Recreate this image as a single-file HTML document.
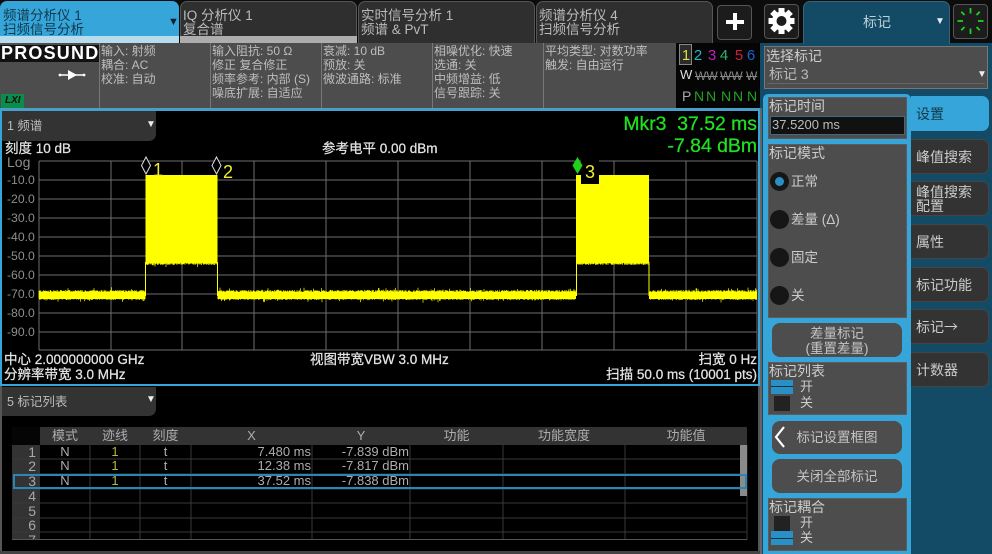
<!DOCTYPE html>
<html lang="zh"><head><meta charset="utf-8"><title>频谱分析仪</title>
<style>
html,body{margin:0;padding:0;background:#000}
#r{position:relative;width:992px;height:554px;overflow:hidden;background:#000;font-family:"Liberation Sans","Noto Sans CJK SC",sans-serif;color:#ccc;filter:blur(.25px)}
#r div{position:absolute;box-sizing:border-box}
.t{white-space:nowrap;line-height:14px}
.h{font-size:12px;line-height:14px;color:#bdbdbd;white-space:pre;top:44px}
.tab{top:1px;height:42px;background:#2f2f2f;border:1px solid #555;border-bottom:0;border-radius:7px 7px 0 0;font-size:13.5px;line-height:13.5px;padding:7px 0 0 2px;color:#bbb;white-space:nowrap}
.k{left:911px;width:78px;background:#333;border:1px solid #444;border-left:0;border-radius:0 7px 7px 0;font-size:14px;line-height:14px;color:#ccc;padding-left:5px;white-space:nowrap}
.box{left:768px;width:139px;background:#4d4d4d;border:1px solid #5c5c5c;font-size:14px;line-height:15px;color:#ccc;white-space:nowrap;padding:1px 0 0 0}
.btn{left:772px;width:130px;background:#4d4d4d;border-radius:8px;font-size:13.5px;line-height:15px;text-align:center;color:#c4c4c4}
.rad{left:770px;width:19px;height:19px;border-radius:50%;background:#161616}
.w{font-size:13.5px;color:#e4e4e4;white-space:nowrap;line-height:14px;-webkit-text-stroke:.25px #e4e4e4}
.c{font-size:13px;line-height:14px;text-align:center;color:#adadad;white-space:nowrap}
.yl{font-size:12.2px;line-height:14px;color:#8e8e8e;left:7px;width:27px;text-align:right;white-space:nowrap}
.rt{font-size:13px;line-height:14px;text-align:right;color:#adadad;white-space:nowrap}
.rn{font-size:14px;line-height:14px;text-align:right;color:#a8a8a8;white-space:nowrap;left:12px;width:24px}
.dg{font-size:15px;line-height:16px;top:48px;width:14px;text-align:center}
.n{font-size:14px;line-height:14px;top:89px;width:14px;text-align:center;color:#25a025}
.ww{font-size:12px;line-height:14px;top:69px;color:#888;text-decoration:line-through;white-space:nowrap;letter-spacing:0}
.m{font-size:19.4px;line-height:20px;color:#22dd22;white-space:pre;-webkit-text-stroke:.3px #22dd22;right:235px}
</style></head><body><div id="r">

<div style="left:0;top:0;width:992px;height:43px;background:#0c0c0c"></div>

<!-- tabs -->
<div style="left:0;top:36px;width:179px;height:7px;background:#b6dcee;z-index:1"></div>
<div class="tab" style="left:0;width:179px;background:#36a6da;border-color:#36a6da;color:#12384c">频谱分析仪 1<br>扫频信号分析</div>
<div style="left:0;top:36px;width:179px;height:7px;background:#b6dcee"></div>
<div class="t" style="left:168px;top:15px;font-size:11px;color:#0c1c28">▼</div>
<div class="tab" style="left:180px;width:177px">IQ 分析仪 1<br>复合谱</div>
<div style="left:180px;top:36px;width:177px;height:7px;background:#adadad"></div>
<div class="tab" style="left:358px;width:177px">实时信号分析 1<br>频谱 &amp; PvT</div>
<div class="tab" style="left:536px;width:177px">频谱分析仪 4<br>扫频信号分析</div>

<!-- plus -->
<div style="left:717px;top:5px;width:35px;height:35px;background:#1c1c1c;border:1px solid #555;border-radius:4px"></div>
<div style="left:726px;top:19.5px;width:18px;height:4px;background:#fff"></div>
<div style="left:733px;top:13px;width:4px;height:17px;background:#fff"></div>

<!-- gear -->
<div style="left:764px;top:4px;width:35px;height:35px;background:#1c1c1c;border:1px solid #555;border-radius:4px"></div>
<svg style="position:absolute;left:764px;top:4px" width="35" height="35" viewBox="0 0 35 35">
<g fill="#fff" transform="translate(17.5 17)">
<circle r="9.5"/>
<rect x="-3" y="-13" width="6" height="6"/><rect x="-3" y="7" width="6" height="6"/>
<rect x="-3" y="-13" width="6" height="6" transform="rotate(45)"/><rect x="-3" y="7" width="6" height="6" transform="rotate(45)"/>
<rect x="-3" y="-13" width="6" height="6" transform="rotate(90)"/><rect x="-3" y="7" width="6" height="6" transform="rotate(90)"/>
<rect x="-3" y="-13" width="6" height="6" transform="rotate(135)"/><rect x="-3" y="7" width="6" height="6" transform="rotate(135)"/>
<circle r="5" fill="#1c1c1c"/></g></svg>

<!-- right panel -->
<div style="left:760px;top:43px;width:232px;height:511px;background:#134b66"></div>
<div style="left:803px;top:1px;width:147px;height:43px;background:#134b66;border:1px solid #3a6278;border-bottom:0;border-radius:7px 7px 0 0"></div>
<div class="t" style="left:863px;top:15px;font-size:14px;color:#bcd0da">标记</div>
<div class="t" style="left:935px;top:15px;font-size:10px;color:#e6eef2">▼</div>

<!-- spinner -->
<div style="left:953px;top:4px;width:35px;height:35px;background:#1c1c1c;border:1px solid #555;border-radius:4px"></div>
<svg style="position:absolute;left:953px;top:4px" width="35" height="35" viewBox="0 0 35 35">
<g stroke="#1fd21f" stroke-width="1.8" transform="translate(17.5 17)">
<line y1="-13" y2="-7.5"/><line y1="-13" y2="-8.5" transform="rotate(45)"/><line y1="-13" y2="-7.5" transform="rotate(90)"/>
<line y1="-13" y2="-8.5" transform="rotate(135)"/><line y1="-13" y2="-7.5" transform="rotate(180)"/><line y1="-13" y2="-8.5" transform="rotate(225)"/>
<line y1="-13" y2="-7.5" transform="rotate(270)"/><line y1="-13" y2="-8.5" transform="rotate(315)"/>
</g></svg>

<!-- header info -->
<div style="left:0;top:43px;width:676px;height:65px;background:#4d4d4d"></div>
<div style="left:99px;top:43px;width:1px;height:65px;background:#777"></div>
<div style="left:210px;top:43px;width:1px;height:65px;background:#777"></div>
<div style="left:321px;top:43px;width:1px;height:65px;background:#777"></div>
<div style="left:432px;top:43px;width:1px;height:65px;background:#777"></div>
<div style="left:543px;top:43px;width:1px;height:65px;background:#777"></div>
<div style="left:0;top:45px;width:99px;height:17px;background:#111"></div>
<div class="t" style="left:1px;top:44px;font-size:18px;line-height:18px;font-weight:bold;color:#fff;letter-spacing:1.2px">PROSUND</div>
<svg style="position:absolute;left:58px;top:68px" width="28" height="14"><path d="M1 7H27" stroke="#fff" stroke-width="1.6"/><path d="M10 2L19 7L10 12Z" fill="#fff"/><circle cx="2" cy="7" r="1.4" fill="#fff"/><circle cx="26" cy="7" r="1.4" fill="#fff"/></svg>
<div style="left:1px;top:94px;width:23px;height:14px;background:#0a8c4a"></div>
<div class="t" style="left:5px;top:94px;font-size:10px;font-weight:bold;font-style:italic;color:#111">LXI</div>
<div class="h" style="left:101px">输入: 射频
耦合: AC
校准: 自动</div>
<div class="h" style="left:212px">输入阻抗: 50 Ω
修正 复合修正
频率参考: 内部 (S)
噪底扩展: 自适应</div>
<div class="h" style="left:323px">衰减: 10 dB
预放: 关
微波通路: 标准</div>
<div class="h" style="left:434px">相噪优化: 快速
选通: 关
中频增益: 低
信号跟踪: 关</div>
<div class="h" style="left:545px">平均类型: 对数功率
触发: 自由运行</div>

<!-- trace box -->
<div style="left:676px;top:43px;width:83px;height:65px;background:#050505"></div>
<div style="left:679px;top:44px;width:13px;height:21px;background:#2c2c2c;border:1px solid #888"></div>
<div class="dg" style="left:679px;color:#dddd44">1</div>
<div class="dg" style="left:691px;color:#22b5c5">2</div>
<div class="dg" style="left:705px;color:#c020c0">3</div>
<div class="dg" style="left:717px;color:#30b070">4</div>
<div class="dg" style="left:732px;color:#d02040">5</div>
<div class="dg" style="left:744px;color:#2060d0">6</div>
<div class="t" style="left:680px;top:68px;font-size:13px;color:#ddd">W</div>
<div class="ww" style="left:695px">WW</div><div class="ww" style="left:720px">WW</div><div class="ww" style="left:746px">W</div>
<div class="t" style="left:682px;top:89px;font-size:14px;color:#aaa">P</div>
<div class="n" style="left:692px">N</div><div class="n" style="left:704px">N</div><div class="n" style="left:719px">N</div><div class="n" style="left:731px">N</div><div class="n" style="left:745px">N</div>

<!-- frame lines -->
<div style="left:0;top:108px;width:760px;height:2.5px;background:#4a9fc8"></div>
<div style="left:0;top:108px;width:2px;height:278px;background:#36a6da"></div>
<div style="left:757.5px;top:108px;width:2.5px;height:278px;background:#36a6da"></div>
<div style="left:0;top:384px;width:760px;height:2px;background:#36a6da"></div>
<div style="left:0;top:386px;width:2px;height:168px;background:#555"></div>
<div style="left:757.5px;top:386px;width:2.5px;height:168px;background:#555"></div>
<div style="left:0;top:551px;width:760px;height:3px;background:#444"></div>
<div style="left:760px;top:108px;width:2px;height:446px;background:#666"></div>

<!-- dropdowns -->
<div style="left:2px;top:111px;width:154px;height:30px;background:#333;border-radius:0 0 7px 0"></div>
<div class="t" style="left:7px;top:119px;font-size:12.5px;color:#bbb">1 频谱</div>
<div class="t" style="left:146px;top:118px;font-size:10px;color:#eee">▼</div>
<div style="left:2px;top:387px;width:154px;height:29px;background:#333;border-radius:0 0 7px 0"></div>
<div class="t" style="left:7px;top:395px;font-size:12.5px;color:#bbb">5 标记列表</div>
<div class="t" style="left:146px;top:393px;font-size:10px;color:#eee">▼</div>

<!-- graph svg -->
<svg id="g" style="position:absolute;left:0;top:0" width="992" height="554" viewBox="0 0 992 554">
<g stroke="#6e6e6e" stroke-width="1" shape-rendering="crispEdges">
<path d="M39 161V350M111 161V350M182 161V350M254 161V350M326 161V350M398 161V350M470 161V350M542 161V350M614 161V350M686 161V350M757 161V350"/>
<path d="M39 161H757M39 180H757M39 199H757M39 218H757M39 237H757M39 256H757M39 275H757M39 294H757M39 313H757M39 332H757M39 350H757"/>
</g>
<g fill="#ffff00" stroke="none">
<rect x="145.5" y="175" width="72" height="88"/>
<rect x="576" y="175" width="73" height="88"/>
<rect x="39" y="292" width="106.5" height="7"/>
<rect x="217.5" y="292" width="358.5" height="7"/>
<rect x="649" y="292" width="108" height="7"/>
<rect x="145" y="262" width="1" height="34"/><rect x="217" y="262" width="1" height="34"/>
<rect x="576" y="262" width="1" height="34"/><rect x="648.5" y="262" width="1" height="34"/>
</g>
<path id="tr" fill="none" stroke="#ffff00" stroke-width=".7"/>
<rect x="581" y="160" width="18" height="24" fill="#000"/>
<path d="M146 157L150.5 165.5L146 174L141.5 165.5Z" fill="#000" stroke="#ddd" stroke-width="1"/>
<path d="M216.5 157L221 165.5L216.5 174L212 165.5Z" fill="#000" stroke="#ddd" stroke-width="1"/>
<path d="M577.5 157L582.5 165.5L577.5 174L572.5 165.5Z" fill="#1ed21e"/>
<!-- table grid -->
<rect x="40" y="427" width="707" height="18" fill="#333"/>
<rect x="12" y="445" width="28" height="95" fill="#333"/>
<rect x="12" y="427" width="28" height="18" fill="#050505"/>
<g stroke="#383838" stroke-width="1" shape-rendering="crispEdges" fill="none">
<path d="M90 445V540M140 445V540M191 445V540M312 445V540M410 445V540M503 445V540M625 445V540M747 445V540"/>
<path d="M12 459H747M12 474H747M12 489H747M12 503H747M12 518H747M12 532H747"/>
<path d="M12 539.5H747" stroke="#555"/>
</g>
<rect x="740" y="445" width="7" height="51" fill="#8a8a8a"/>
<rect x="14" y="475" width="732" height="13" fill="none" stroke="#2a86b4" stroke-width="2"/>
</svg>

<!-- marker labels -->
<div class="t" style="left:153px;top:161px;font-size:18px;line-height:18px;color:#eeee33">1</div>
<div class="t" style="left:223px;top:163px;font-size:18px;line-height:18px;color:#eeee33">2</div>
<div class="t" style="left:585px;top:163px;font-size:18px;line-height:18px;color:#eeee33">3</div>

<!-- graph text -->
<div class="w" style="left:5px;top:142px">刻度 10 dB</div>
<div class="w" style="left:322px;top:142px">参考电平 0.00 dBm</div>
<div class="t" style="left:7px;top:155px;font-size:14px;color:#8e8e8e">Log</div>
<div class="yl" style="top:173px">-10.0</div><div class="yl" style="top:192px">-20.0</div><div class="yl" style="top:211px">-30.0</div><div class="yl" style="top:230px">-40.0</div><div class="yl" style="top:249px">-50.0</div><div class="yl" style="top:268px">-60.0</div><div class="yl" style="top:287px">-70.0</div><div class="yl" style="top:306px">-80.0</div><div class="yl" style="top:325px">-90.0</div>
<div class="m" style="top:114px">Mkr3  37.52 ms</div>
<div class="m" style="top:136px">-7.84 dBm</div>
<div class="w" style="left:4px;top:353px">中心 2.000000000 GHz</div>
<div class="w" style="left:4px;top:368px">分辨率带宽 3.0 MHz</div>
<div class="w" style="left:310px;top:353px">视图带宽VBW 3.0 MHz</div>
<div class="w" style="right:235px;top:353px">扫宽 0 Hz</div>
<div class="w" style="right:235px;top:368px">扫描 50.0 ms (10001 pts)</div>

<!-- table text -->
<div class="c" style="left:40px;top:429px;width:50px">模式</div>
<div class="c" style="left:90px;top:429px;width:50px">迹线</div>
<div class="c" style="left:140px;top:429px;width:51px">刻度</div>
<div class="c" style="left:191px;top:429px;width:121px">X</div>
<div class="c" style="left:312px;top:429px;width:98px">Y</div>
<div class="c" style="left:410px;top:429px;width:93px">功能</div>
<div class="c" style="left:503px;top:429px;width:122px">功能宽度</div>
<div class="c" style="left:625px;top:429px;width:122px">功能值</div>

<div class="rn" style="top:445px">1</div><div class="c" style="left:40px;top:445px;width:50px">N</div><div class="c" style="left:90px;top:445px;width:50px;color:#b0b840">1</div><div class="c" style="left:140px;top:445px;width:51px">t</div><div class="rt" style="left:191px;top:445px;width:120px">7.480 ms</div><div class="rt" style="left:312px;top:445px;width:97px">-7.839 dBm</div>
<div class="rn" style="top:459px">2</div><div class="c" style="left:40px;top:459px;width:50px">N</div><div class="c" style="left:90px;top:459px;width:50px;color:#b0b840">1</div><div class="c" style="left:140px;top:459px;width:51px">t</div><div class="rt" style="left:191px;top:459px;width:120px">12.38 ms</div><div class="rt" style="left:312px;top:459px;width:97px">-7.817 dBm</div>
<div class="rn" style="top:474px">3</div><div class="c" style="left:40px;top:474px;width:50px">N</div><div class="c" style="left:90px;top:474px;width:50px;color:#b0b840">1</div><div class="c" style="left:140px;top:474px;width:51px">t</div><div class="rt" style="left:191px;top:474px;width:120px">37.52 ms</div><div class="rt" style="left:312px;top:474px;width:97px">-7.838 dBm</div>
<div class="rn" style="top:489px">4</div>
<div class="rn" style="top:504px">5</div>
<div class="rn" style="top:518px">6</div>
<div class="rn" style="top:533px;height:6px;overflow:hidden">7</div>

<!-- right: select -->
<div style="left:764px;top:46px;width:224px;height:43px;background:#4d4d4d;border:1px solid #777"></div>
<div style="left:767px;top:83px;width:218px;height:1px;background:#666"></div>
<div class="t" style="left:766px;top:49px;font-size:14px;color:#ccc">选择标记</div>
<div class="t" style="left:769px;top:67px;font-size:14px;color:#bbb">标记 3</div>
<div class="t" style="left:977px;top:68px;font-size:10px;color:#eee">▼</div>

<!-- soft keys -->
<div style="left:911px;top:96px;width:78px;height:35px;background:#36a6da;border-radius:0 7px 7px 0"></div>
<div class="t" style="left:916px;top:107px;font-size:14px;color:#12384c">设置</div>
<div class="k" style="top:139px;height:35px;padding-top:10px">峰值搜索</div>
<div class="k" style="top:181px;height:35px;padding-top:3px">峰值搜索<br>配置</div>
<div class="k" style="top:224px;height:35px;padding-top:10px">属性</div>
<div class="k" style="top:267px;height:35px;padding-top:10px">标记功能</div>
<div class="k" style="top:309px;height:35px;padding-top:10px">标记<span style="font-family:'Noto Sans CJK SC',sans-serif">→</span></div>
<div class="k" style="top:352px;height:35px;padding-top:10px">计数器</div>

<!-- blue block -->
<div style="left:763px;top:94px;width:148px;height:460px;background:#36a6da;border-radius:5px 5px 0 0"></div>
<div class="box" style="top:97px;height:42px">标记时间</div>
<div style="left:770px;top:116px;width:135px;height:19px;background:#111;border:1px solid #3e6a82"></div>
<div class="t" style="left:772px;top:118px;font-size:13px;color:#bbb">37.5200 ms</div>

<div class="box" style="top:144px;height:174px">标记模式</div>
<div class="rad" style="top:172px"></div><div style="left:775px;top:177px;width:9px;height:9px;border-radius:50%;background:#2a8fc4"></div>
<div class="rad" style="top:210px"></div><div class="rad" style="top:248px"></div><div class="rad" style="top:286px"></div>
<div class="t" style="left:791px;top:175px;font-size:13.5px;color:#ccc">正常</div>
<div class="t" style="left:791px;top:213px;font-size:13.5px;color:#ccc">差量 (Δ)</div>
<div class="t" style="left:791px;top:251px;font-size:13.5px;color:#ccc">固定</div>
<div class="t" style="left:791px;top:289px;font-size:13.5px;color:#ccc">关</div>

<div class="btn" style="top:323px;height:34px;padding-top:3px">差量标记<br>(重置差量)</div>

<div class="box" style="top:362px;height:53px">标记列表</div>
<div style="left:771px;top:380px;width:22px;height:14px;background:#2a8fc4"></div>
<div style="left:771px;top:386px;width:22px;height:1px;background:#0b3448"></div>
<div style="left:774px;top:396px;width:16px;height:15px;background:#222"></div>
<div class="t" style="left:800px;top:380px;font-size:13px;color:#ccc">开</div>
<div class="t" style="left:800px;top:396px;font-size:13px;color:#ccc">关</div>

<div class="btn" style="top:421px;height:33px;padding-top:9px">标记设置框图</div>
<svg style="position:absolute;left:773px;top:424px" width="14" height="26"><path d="M11 3L3 13L11 23" fill="none" stroke="#fff" stroke-width="2.2"/></svg>
<div class="btn" style="top:459px;height:34px;padding-top:10px">关闭全部标记</div>

<div class="box" style="top:498px;height:53px">标记耦合</div>
<div style="left:774px;top:516px;width:16px;height:15px;background:#222"></div>
<div style="left:771px;top:531px;width:22px;height:14px;background:#2a8fc4"></div>
<div style="left:771px;top:538px;width:22px;height:1px;background:#0b3448"></div>
<div class="t" style="left:800px;top:516px;font-size:13px;color:#ccc">开</div>
<div class="t" style="left:800px;top:531px;font-size:13px;color:#ccc">关</div>

<script>
(function(){var s=12345;function R(){s=(s*1103515245+12345)&2147483647;return s/2147483647}
var d="";function seg(a,b,lo,hi,sp){for(var x=a;x<b;x+=.5){var t=lo-R()*2,u=hi+R()*2;if(R()<sp){t-=R()*3;}if(R()<sp){u+=R()*3;}d+="M"+x+" "+t.toFixed(1)+"V"+u.toFixed(1);}}
seg(39,145.5,292,298,.06);seg(218,576,292,298,.06);seg(649.5,757,292,298,.06);seg(146,217,262,263,.03);seg(576.5,648.5,262,263,.03);
document.getElementById("tr").setAttribute("d",d);})();
</script>
</div></body></html>
